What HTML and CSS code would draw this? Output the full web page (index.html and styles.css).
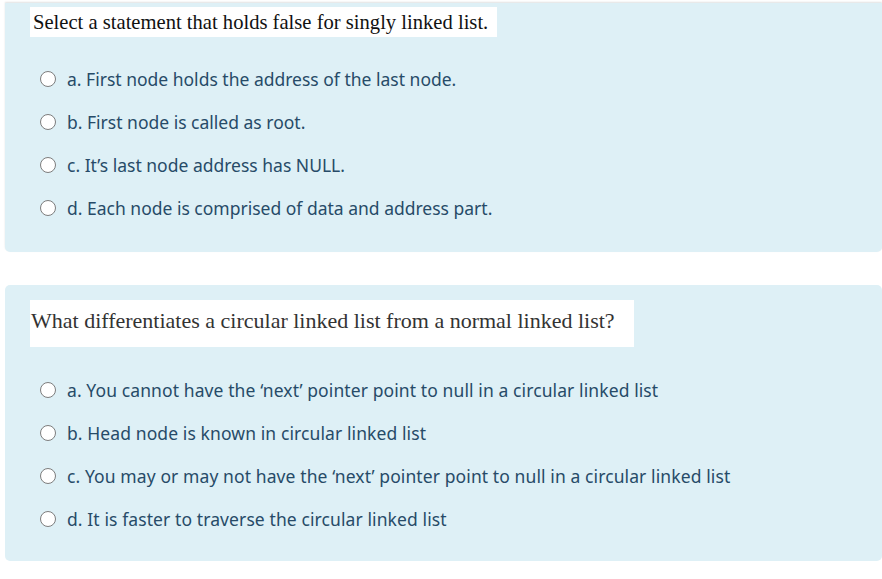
FILE: index.html
```html
<!DOCTYPE html>
<html lang="en">
<head>
<meta charset="utf-8">
<title>Quiz</title>
<link rel="stylesheet" href="styles.css">
</head>
<body>
<div class="page">
  <section class="panel panel-one">
    <div class="qtext qtext-one">Select a statement that holds false for singly linked list.</div>
    <div class="answers">
      <label class="option"><span class="radio"></span><span>a. First node holds the address of the last node.</span></label>
      <label class="option"><span class="radio"></span><span>b. First node is called as root.</span></label>
      <label class="option"><span class="radio"></span><span>c. It’s last node address has NULL.</span></label>
      <label class="option"><span class="radio"></span><span>d. Each node is comprised of data and address part.</span></label>
    </div>
  </section>
  <section class="panel panel-two">
    <div class="qtext qtext-two">What differentiates a circular linked list from a normal linked list?</div>
    <div class="answers answers-two">
      <label class="option"><span class="radio"></span><span>a. You cannot have the ‘next’ pointer point to null in a circular linked list</span></label>
      <label class="option"><span class="radio"></span><span>b. Head node is known in circular linked list</span></label>
      <label class="option"><span class="radio"></span><span>c. You may or may not have the ‘next’ pointer point to null in a circular linked list</span></label>
      <label class="option"><span class="radio"></span><span>d. It is faster to traverse the circular linked list</span></label>
    </div>
  </section>
</div>
</body>
</html>
```
FILE: styles.css
```css
html, body {
  margin: 0;
  padding: 0;
  background: #ffffff;
}

.page {
  display: flex;
  flex-direction: column;
  gap: 33px;
  padding: 3px 0 0 5px;
}

.panel {
  background: #def0f6;
  border-radius: 0 0 5px 5px;
  display: flex;
  flex-direction: column;
  align-items: flex-start;
  padding-left: 25px;
}

.panel-one {
  padding-top: 4px;
  padding-bottom: 23px;
  box-shadow: 0 -1px 2px rgba(0, 0, 0, 0.12);
}

.panel-two {
  border-radius: 5px;
  padding-top: 15px;
  padding-bottom: 21px;
}

.qtext {
  background: #ffffff;
  font-family: "Liberation Serif", "Times New Roman", serif;
  color: #000;
  box-sizing: border-box;
  white-space: nowrap;
  overflow: hidden;
}

.qtext-one {
  width: 467px;
  height: 30px;
  font-size: 20.6px;
  line-height: 30px;
  padding-left: 3px;
  color: #111;
}

.qtext-two {
  width: 604px;
  height: 47px;
  font-size: 22px;
  line-height: 42px;
  color: #333;
  padding-left: 1px;
}

.answers {
  display: flex;
  flex-direction: column;
  margin-top: 20px;
  padding-left: 10px;
}

.answers-two {
  margin-top: 21px;
  letter-spacing: 0.1px;
}

.option {
  height: 43px;
  display: flex;
  align-items: center;
  gap: 11px;
  font-family: "Noto Sans", "Open Sans", sans-serif;
  font-size: 17.5px;
  color: #274b68;
}

.radio {
  width: 14px;
  height: 14px;
  border: 1px solid #7d7d7d;
  border-radius: 50%;
  background: #ffffff;
  flex-shrink: 0;
}
```
